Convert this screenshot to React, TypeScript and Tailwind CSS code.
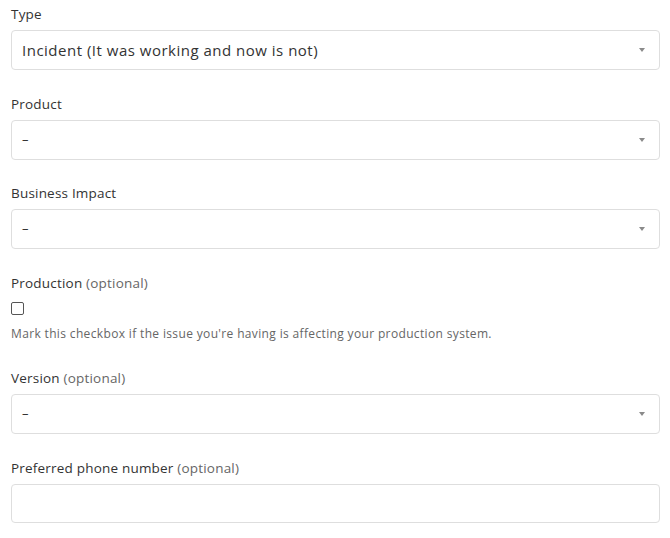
import React from "react"

const font = { fontFamily: '"Open Sans", "Liberation Sans", sans-serif' }

const Label = ({ text, optional }: { text: string; optional?: boolean }) => (
  <label className="block text-[13.5px] leading-[20px] tracking-[0.2px] text-[#333]">
    {text}
    {optional && <span className="text-[#666]"> (optional)</span>}
  </label>
)

const Caret = () => (
  <svg width="6" height="4" viewBox="0 0 6 4" className="absolute right-[14px] top-1/2 -translate-y-1/2">
    <path d="M0 0h6L3 4z" fill="#8a8a8a" />
  </svg>
)

const SelectBox = ({ value, large }: { value: string; large?: boolean }) => (
  <div className="relative mt-[6px] flex h-[40px] items-center rounded-[4px] border border-[#dedede] bg-white pl-[10px]">
    <span
      className={
        large
          ? "text-[15px] tracking-[0.5px] text-[#333]"
          : "text-[13px] text-[#333]"
      }
    >
      {value}
    </span>
    <Caret />
  </div>
)

const Field = ({
  label,
  optional,
  children,
}: {
  label: string
  optional?: boolean
  children: React.ReactNode
}) => (
  <div className="mb-[23.5px]">
    <Label text={label} optional={optional} />
    {children}
  </div>
)

export default function App() {
  return (
    <div className="min-h-[538px] bg-white pl-[11px] pr-[10px] pt-[4px]" style={font}>
      <Field label="Type">
        <SelectBox value="Incident (It was working and now is not)" large />
      </Field>
      <Field label="Product">
        <SelectBox value="–" />
      </Field>
      <Field label="Business Impact">
        <SelectBox value="–" />
      </Field>
      <div className="mb-[26px]">
        <Label text="Production" optional />
        <div className="mt-[9.5px] h-[13px] w-[13px] rounded-[2px] border border-[#555]" />
        <p className="mt-[11px] text-[12px] leading-[16px] tracking-[0.35px] text-[#666]">
          Mark this checkbox if the issue you're having is affecting your production system.
        </p>
      </div>
      <Field label="Version" optional>
        <SelectBox value="–" />
      </Field>
      <Field label="Preferred phone number" optional>
        <div className="mt-[6px] h-[39px] rounded-[4px] border border-[#dedede] bg-white" />
      </Field>
    </div>
  )
}
